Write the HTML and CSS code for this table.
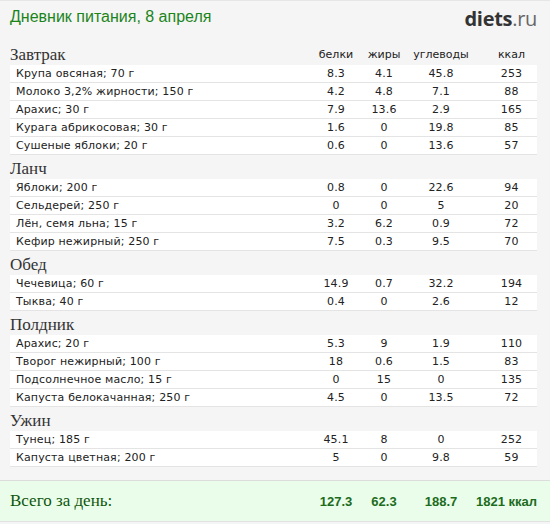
FILE: index.html
```html
<!DOCTYPE html>
<html lang="ru">
<head>
  <meta charset="UTF-8" />
  <title>Дневник питания</title>
  <link rel="stylesheet" href="styles.css">
</head>
<body>
<div class="page">
  <div class="top">
    <h1 class="title">Дневник питания, 8 апреля</h1>
    <div class="logo"><b>diets</b>.ru</div>
  </div>

  <!-- Завтрак -->
  <div class="meal">
    <div class="meal-head">
      <h2>Завтрак</h2>
      <span class="col">белки</span>
      <span class="col c2">жиры</span>
      <span class="col c3">углеводы</span>
      <span class="col c4">ккал</span>
    </div>
    <div class="item"><span class="name">Крупа овсяная; 70 г</span><span class="col">8.3</span><span class="col c2">4.1</span><span class="col c3">45.8</span><span class="col c4">253</span></div>
    <div class="item"><span class="name">Молоко 3,2% жирности; 150 г</span><span class="col">4.2</span><span class="col c2">4.8</span><span class="col c3">7.1</span><span class="col c4">88</span></div>
    <div class="item"><span class="name">Арахис; 30 г</span><span class="col">7.9</span><span class="col c2">13.6</span><span class="col c3">2.9</span><span class="col c4">165</span></div>
    <div class="item"><span class="name">Курага абрикосовая; 30 г</span><span class="col">1.6</span><span class="col c2">0</span><span class="col c3">19.8</span><span class="col c4">85</span></div>
    <div class="item"><span class="name">Сушеные яблоки; 20 г</span><span class="col">0.6</span><span class="col c2">0</span><span class="col c3">13.6</span><span class="col c4">57</span></div>
  </div>

  <!-- Ланч -->
  <div class="meal">
    <div class="meal-head"><h2>Ланч</h2></div>
    <div class="item"><span class="name">Яблоки; 200 г</span><span class="col">0.8</span><span class="col c2">0</span><span class="col c3">22.6</span><span class="col c4">94</span></div>
    <div class="item"><span class="name">Сельдерей; 250 г</span><span class="col">0</span><span class="col c2">0</span><span class="col c3">5</span><span class="col c4">20</span></div>
    <div class="item"><span class="name">Лён, семя льна; 15 г</span><span class="col">3.2</span><span class="col c2">6.2</span><span class="col c3">0.9</span><span class="col c4">72</span></div>
    <div class="item"><span class="name">Кефир нежирный; 250 г</span><span class="col">7.5</span><span class="col c2">0.3</span><span class="col c3">9.5</span><span class="col c4">70</span></div>
  </div>

  <!-- Обед -->
  <div class="meal">
    <div class="meal-head"><h2>Обед</h2></div>
    <div class="item"><span class="name">Чечевица; 60 г</span><span class="col">14.9</span><span class="col c2">0.7</span><span class="col c3">32.2</span><span class="col c4">194</span></div>
    <div class="item"><span class="name">Тыква; 40 г</span><span class="col">0.4</span><span class="col c2">0</span><span class="col c3">2.6</span><span class="col c4">12</span></div>
  </div>

  <!-- Полдник -->
  <div class="meal">
    <div class="meal-head"><h2>Полдник</h2></div>
    <div class="item"><span class="name">Арахис; 20 г</span><span class="col">5.3</span><span class="col c2">9</span><span class="col c3">1.9</span><span class="col c4">110</span></div>
    <div class="item"><span class="name">Творог нежирный; 100 г</span><span class="col">18</span><span class="col c2">0.6</span><span class="col c3">1.5</span><span class="col c4">83</span></div>
    <div class="item"><span class="name">Подсолнечное масло; 15 г</span><span class="col">0</span><span class="col c2">15</span><span class="col c3">0</span><span class="col c4">135</span></div>
    <div class="item"><span class="name">Капуста белокачанная; 250 г</span><span class="col">4.5</span><span class="col c2">0</span><span class="col c3">13.5</span><span class="col c4">72</span></div>
  </div>

  <!-- Ужин -->
  <div class="meal">
    <div class="meal-head"><h2>Ужин</h2></div>
    <div class="item"><span class="name">Тунец; 185 г</span><span class="col">45.1</span><span class="col c2">8</span><span class="col c3">0</span><span class="col c4">252</span></div>
    <div class="item"><span class="name">Капуста цветная; 200 г</span><span class="col">5</span><span class="col c2">0</span><span class="col c3">9.8</span><span class="col c4">59</span></div>
  </div>

  <div class="total">
    <span class="total-label">Всего за день:</span>
    <span class="col">127.3</span>
    <span class="col c2">62.3</span>
    <span class="col c3">188.7</span>
    <span class="col c4 kcal">1821 ккал</span>
  </div>
</div>
</body>
</html>
```

FILE: styles.css
```css
body {
  margin: 0;
  background: #fff;
}
.page {
  width: 550px;
  height: 524px;
  box-sizing: border-box;
  background: #f5f5f5;
  border-top: 1px solid #e6e6e6;
  display: flex;
  flex-direction: column;
  font-family: 'DejaVu Sans', Verdana, sans-serif;
}
.top {
  display: flex;
  justify-content: space-between;
  align-items: flex-start;
  box-sizing: border-box;
  height: 40px;
  flex: none;
  padding: 4px 13px 0 10px;
}
.title {
  margin: 3px 0 0;
  font-family: 'Liberation Sans', Arial, sans-serif;
  font-weight: normal;
  font-size: 16px;
  color: #1b841b;
}
.logo {
  font-family: 'Open Sans', 'Liberation Sans', sans-serif;
  font-size: 20px;
  line-height: 27px;
  color: #666;
  letter-spacing: -0.3px;
}
.logo b {
  color: #333;
}
.meal {
  padding: 0 13px 0 10px;
}
.meal-head {
  display: flex;
  align-items: flex-end;
  height: 24px;
  font-size: 11px;
  line-height: 20px;
  color: #222;
}
.meal-head h2 {
  flex: 1;
  margin: 0;
  font-family: 'Liberation Serif', 'Times New Roman', serif;
  font-weight: normal;
  font-size: 17px;
  line-height: 20px;
  color: #333;
}
.item {
  display: flex;
  height: 17px;
  line-height: 17px;
  background: #fff;
  border-bottom: 1px solid #e4e4e4;
  padding-left: 6px;
  font-size: 11px;
  letter-spacing: 0.15px;
  color: #222;
}
.name {
  flex: 1;
}
.col {
  display: flex;
  justify-content: center;
  flex: none;
  width: 72px;
  white-space: nowrap;
}
.c2 {
  width: 24px;
}
.c3 {
  width: 90px;
}
.c4 {
  width: 51px;
}
.total {
  margin-top: auto;
  margin-bottom: 2px;
  height: 40px;
  display: flex;
  align-items: center;
  padding: 0 13px 0 10px;
  background: #eafdea;
  border-top: 1px solid #dcdcdc;
  border-bottom: 1px solid #e2e2e2;
  font-family: 'Liberation Sans', Arial, sans-serif;
  font-weight: bold;
  font-size: 13px;
  color: #1d6b1d;
}
.total-label {
  flex: 1;
  font-family: 'Liberation Serif', 'Times New Roman', serif;
  font-weight: normal;
  font-size: 17px;
  color: #0d560d;
}
.kcal {
  justify-content: flex-end;
}
```
